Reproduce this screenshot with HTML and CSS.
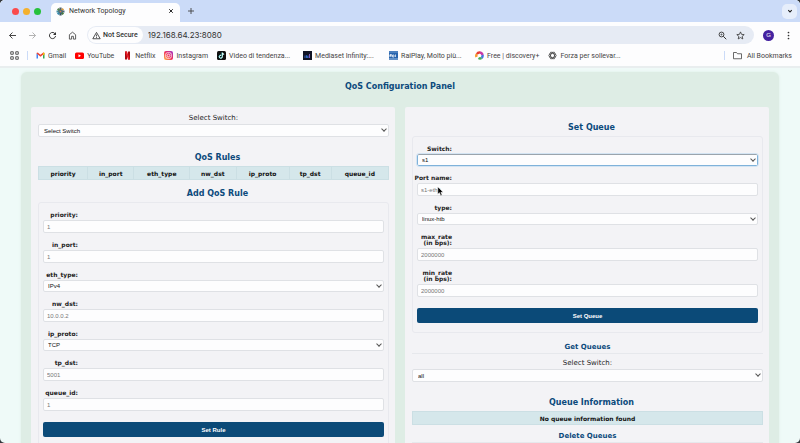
FILE: index.html
```html
<!DOCTYPE html>
<html lang="en">
<head>
<meta charset="utf-8">
<title>Network Topology</title>
<link rel="stylesheet" href="styles.css">
</head>
<body>
<div class="window">
  <header class="chrome">
    <div class="tabstrip">
      <div class="lights"><i class="red"></i><i class="amber"></i><i class="green"></i></div>
      <div class="tab">
        <svg class="ico" viewBox="0 0 18 18"><g fill="none" stroke-width="4.4"><path d="M9 1v5" stroke="#51616b"/><path d="M14.6 3.4L11 7" stroke="#d59a43"/><path d="M17 9h-5" stroke="#4a6478"/><path d="M14.6 14.6L11 11" stroke="#467b3f"/><path d="M9 17v-5" stroke="#33505f"/><path d="M3.4 14.6L7 11" stroke="#3988ad"/><path d="M1 9h5" stroke="#468fa4"/><path d="M3.4 3.4L7 7" stroke="#56834f"/></g><circle cx="9" cy="9" r="4" fill="#4e6f7c"/><circle cx="9" cy="9" r="1.6" fill="#e07944"/></svg>
        <span class="tab-title">Network Topology</span>
        <button class="icon-btn" aria-label="Close tab"><svg class="mini" viewBox="0 0 10 10"><path d="M2 2l6 6M8 2L2 8" stroke="#222" stroke-width="1.6"/></svg></button>
      </div>
      <button class="icon-btn new-tab" aria-label="New tab"><svg class="mini" viewBox="0 0 10 10"><path d="M5 0v10M0 5h10" stroke="#444" stroke-width="1.5"/></svg></button>
      <button class="icon-btn tab-search" aria-label="Search tabs"><svg class="mini" viewBox="0 0 10 10"><path d="M2 3.5l3 3 3-3" fill="none" stroke="#222" stroke-width="1.8"/></svg></button>
    </div>
    <div class="toolbar">
      <nav class="nav">
        <button class="icon-btn" aria-label="Back"><svg class="ico" viewBox="0 0 18 18"><path d="M16 9H3M9 3L3 9l6 6" fill="none" stroke="#333" stroke-width="1.8"/></svg></button>
        <button class="icon-btn" aria-label="Forward"><svg class="ico" viewBox="0 0 18 18"><path d="M2 9h13M9 3l6 6-6 6" fill="none" stroke="#aaa" stroke-width="1.8"/></svg></button>
        <button class="icon-btn" aria-label="Reload"><svg class="ico" viewBox="0 0 18 18"><path d="M14.6 6.2A6.2 6.2 0 1 0 15.2 10" fill="none" stroke="#333" stroke-width="1.9"/><path d="M16 1.8v6h-6z" fill="#333"/></svg></button>
        <button class="icon-btn" aria-label="Home"><svg class="ico" viewBox="0 0 18 18"><path d="M2.8 7.4L9 2.4l6.2 5v8.8h-4.4v-5.6H7.2v5.6H2.8z" fill="none" stroke="#444" stroke-width="1.7"/></svg></button>
      </nav>
      <div class="omnibox">
        <span class="secure"><svg class="ico" viewBox="0 0 18 18"><path d="M9 2.8L16.4 15.5H1.6z" fill="none" stroke="#333" stroke-width="1.7"/><path d="M9 7v4M9 12.2v1.8" stroke="#333" stroke-width="1.6"/></svg>Not Secure</span>
        <input class="url" type="text" aria-label="Address" value="192.168.64.23:8080">
        <button class="icon-btn" aria-label="Zoom"><svg class="ico" viewBox="0 0 18 18"><circle cx="7" cy="7" r="4.8" fill="none" stroke="#333" stroke-width="1.8"/><path d="M10.6 10.6L16.5 16.5" stroke="#333" stroke-width="2"/><path d="M4.8 7h4.4M7 4.8v4.4" stroke="#333" stroke-width="1"/></svg></button>
        <button class="icon-btn" aria-label="Bookmark"><svg class="ico" viewBox="0 0 18 18"><path d="M9 1.8l2.1 4.9 5.3.5-4 3.5 1.2 5.2L9 13.1l-4.6 2.8 1.2-5.2-4-3.5 5.3-.5z" fill="none" stroke="#333" stroke-width="1.6"/></svg></button>
      </div>
      <button class="avatar" aria-label="Profile">G</button>
      <button class="icon-btn" aria-label="Menu"><svg class="ico" viewBox="0 0 18 18"><g fill="#333"><circle cx="9" cy="3" r="1.7"/><circle cx="9" cy="9" r="1.7"/><circle cx="9" cy="15" r="1.7"/></g></svg></button>
    </div>
    <nav class="bookmarks">
      <button class="icon-btn apps" aria-label="Apps"><svg class="ico" viewBox="0 0 18 18"><path d="M1.5 1.5h5v5h-5zM11.5 1.5h5v5h-5zM1.5 11.5h5v5h-5zM11.5 11.5h5v5h-5z" fill="none" stroke="#444" stroke-width="1.8"/></svg></button>
      <div class="links">
      <a href="#"><svg class="ico" viewBox="0 0 18 18"><path d="M1 15V5l3 2v8z" fill="#4285f4"/><path d="M17 15V5l-3 2v8z" fill="#34a853"/><path d="M1 5l1-2 2 .5 5 4 5-4 2-.5 1 2-8 6.5z" fill="#ea4335"/><path d="M14 3.5L16 3l1 2v2l-3 2z" fill="#fbbc04"/></svg>Gmail</a>
      <a href="#"><svg class="ico" viewBox="0 0 18 18"><rect x="0" y="3" width="18" height="13" rx="3" fill="#f00"/><path d="M7 6.5l5 3-5 3z" fill="#fff"/></svg>YouTube</a>
      <a href="#"><svg class="ico" viewBox="0 0 18 18"><path d="M4 1h4v16H4zM10 1h4v16h-4z" fill="#a80b12"/><path d="M4 1h4l6 16h-4z" fill="#ec1c27"/></svg>Netflix</a>
      <a href="#"><svg class="ico" viewBox="0 0 18 18"><defs><linearGradient id="insta" x1="0" y1="1" x2="1" y2="0"><stop offset="0" stop-color="#ffc14a"/><stop offset=".5" stop-color="#f02c5c"/><stop offset="1" stop-color="#9a35ca"/></linearGradient></defs><rect width="18" height="18" rx="4" fill="url(#insta)"/><rect x="3.5" y="3.5" width="11" height="11" rx="3" fill="none" stroke="#fff" stroke-width="1.5"/><circle cx="9" cy="9" r="2.6" fill="none" stroke="#fff" stroke-width="1.5"/></svg>Instagram</a>
      <a class="long" href="#"><svg class="ico" viewBox="0 0 18 18"><rect width="18" height="18" rx="3" fill="#111"/><path d="M8 8.5a3 3 0 1 0 2.3 3V3.5c.5 2 1.5 3 3.5 3.2" fill="none" stroke="#25f4ee" stroke-width="2"/><path d="M8.5 8.5a3 3 0 1 0 2.3 3V3.5c.5 2 1.5 3 3.5 3.2" fill="none" stroke="#fff" stroke-width="1.7"/></svg>Video di tendenza...</a>
      <a class="long" href="#"><svg class="ico" viewBox="0 0 18 18"><rect width="18" height="18" fill="#101425"/><path d="M4 14V9M7 14V9l3 5V9" fill="none" stroke="#3974e0" stroke-width="1.6"/><path d="M13 14V6" stroke="#9463cf" stroke-width="1.8"/></svg>Mediaset Infinity:...</a>
      <a class="long" href="#"><svg class="ico" viewBox="0 0 18 18"><rect width="18" height="18" fill="#2864ad"/><path d="M0 1h18v2H0z" fill="#6c9bce"/><path d="M2 12V7h3v2H2l3 3M7 12V8h3v4H7M13 7v5" fill="none" stroke="#fff" stroke-width="1.4"/><path d="M0 16h18" stroke="#9fc0e3" stroke-width="2"/></svg>RaiPlay, Molto più...</a>
      <a href="#"><svg class="ico" viewBox="0 0 18 18"><g fill="none" stroke-width="5"><path d="M3 12a6 6 0 0 1 1-6" stroke="#f69b2d"/><path d="M4 6a6 6 0 0 1 6-3" stroke="#e83c35"/><path d="M10 3a6 6 0 0 1 5 5" stroke="#c73ba9"/><path d="M15 8a6 6 0 0 1-2 6" stroke="#4775df"/><path d="M13 14a6 6 0 0 1-6 0" stroke="#43ad5a"/></g><circle cx="9" cy="9" r="2.5" fill="#fff"/></svg>Free | discovery+</a>
      <a href="#"><svg class="ico" viewBox="0 0 18 18"><g fill="none" stroke="#444" stroke-width="1.5"><ellipse cx="9" cy="9" rx="7.5" ry="4"/><ellipse cx="9" cy="9" rx="7.5" ry="4" transform="rotate(60 9 9)"/><ellipse cx="9" cy="9" rx="7.5" ry="4" transform="rotate(120 9 9)"/></g></svg>Forza per sollevar...</a>
      </div>
      <a class="all" href="#"><svg class="ico" viewBox="0 0 18 18"><path d="M1 3h6l2 2.5h8V15.5H1z" fill="none" stroke="#444" stroke-width="1.6"/></svg>All Bookmarks</a>
    </nav>
  </header>
  <main class="page">
    <section class="panel">
      <h1>QoS Configuration Panel</h1>
      <div class="columns">
        <section class="card">
          <label class="pick" for="rule-switch">Select Switch:</label>
          <div class="select wide"><select id="rule-switch"><option>Select Switch</option></select></div>
          <h2 class="spaced">QoS Rules</h2>
          <table>
            <tr><th>priority</th><th>in_port</th><th>eth_type</th><th>nw_dst</th><th>ip_proto</th><th>tp_dst</th><th>queue_id</th></tr>
          </table>
          <h2>Add QoS Rule</h2>
          <form class="box">
            <div class="field"><label for="priority">priority:</label><input id="priority" type="text" placeholder="1"></div>
            <div class="field"><label for="in-port">in_port:</label><input id="in-port" type="text" placeholder="1"></div>
            <div class="field"><label for="eth">eth_type:</label><div class="select"><select id="eth"><option>IPv4</option></select></div></div>
            <div class="field"><label for="dst">nw_dst:</label><input id="dst" type="text" placeholder="10.0.0.2"></div>
            <div class="field"><label for="proto">ip_proto:</label><div class="select"><select id="proto"><option>TCP</option></select></div></div>
            <div class="field"><label for="tp">tp_dst:</label><input id="tp" type="text" placeholder="5001"></div>
            <div class="field"><label for="queue">queue_id:</label><input id="queue" type="text" placeholder="1"></div>
            <button class="submit" type="button">Set Rule</button>
          </form>
        </section>
        <section class="card">
          <h2 class="first">Set Queue</h2>
          <form class="box">
            <div class="field"><label for="q-switch">Switch:</label><div class="select active"><select id="q-switch"><option>s1</option></select></div></div>
            <div class="field"><label for="port">Port name:</label><div class="pointed"><input id="port" type="text" placeholder="s1-eth1"><svg class="pointer" viewBox="0 0 10 16"><path d="M1 1v11l2.5-2.3L5.3 14l2-.9-1.8-4H9z" fill="#000" stroke="#fff" stroke-width=".8"/></svg></div></div>
            <div class="field"><label for="type">type:</label><div class="select"><select id="type"><option>linux-htb</option></select></div></div>
            <div class="field"><label for="max">max_rate (in bps):</label><input id="max" type="text" placeholder="2000000"></div>
            <div class="field"><label for="min">min_rate (in bps):</label><input id="min" type="text" placeholder="2000000"></div>
            <button class="submit" type="button">Set Queue</button>
          </form>
          <h3>Get Queues</h3>
          <label class="pick" for="get-switch">Select Switch:</label>
          <div class="select wide"><select id="get-switch"><option>all</option></select></div>
          <h2 class="spaced">Queue Information</h2>
          <table><tr><th>No queue information found</th></tr></table>
          <h3 class="near">Delete Queues</h3>
        </section>
      </div>
    </section>
  </main>
</div>
</body>
</html>
```
FILE: styles.css
```css
* { box-sizing: border-box; }
body { margin: 0; background: #33383d; font-family: "DejaVu Sans", Verdana, sans-serif; color: #222; }
h1, h2, h3 { margin: 0; color: #0c4a7c; text-align: center; font-weight: bold; }
button, input, select { font-family: "Liberation Sans", Arial, sans-serif; margin: 0; }
svg { display: block; }

.window { height: 100vh; display: flex; flex-direction: column; overflow: hidden; border-radius: 5px; background: #effaf8; }

/* Browser chrome */
.chrome { flex: none; background: #fdfdfe; border-bottom: 2px solid #e9eeef; font-family: Roboto, Inter, sans-serif; font-size: 7px; color: #333; }
.icon-btn { border: 0; padding: 0; background: none; flex: none; }
.ico { width: 9px; height: 9px; flex: none; }
.mini { width: 6px; height: 6px; }
.tabstrip { height: 22px; display: flex; align-items: center; background: #cbdbf8; padding: 0 3px 0 12px; }
.lights { display: flex; gap: 4px; width: 39px; }
.lights i { width: 7px; height: 7px; border-radius: 50%; }
.red { background: #fb4b4c; }
.amber { background: #f4b02d; }
.green { background: #27c13b; }
.tab { align-self: flex-end; width: 129px; height: 19px; display: flex; align-items: center; gap: 4px; padding: 0 6px 3px 5px; background: #fdfdfe; border-radius: 5px 5px 0 0; }
.tab-title { flex: 1; }
.new-tab { margin-left: 8px; }
.tab-search { margin-left: auto; width: 15px; height: 15px; border-radius: 5px; background: #e6eefb; display: grid; place-items: center; }
.toolbar { height: 24px; display: flex; align-items: center; padding: 2px 7px 0 8px; }
.nav { display: flex; gap: 11px; margin-right: 10px; }
.omnibox { flex: 1; height: 18px; display: flex; align-items: center; gap: 9px; background: #e6ebf4; border-radius: 9px; padding: 0 9px 0 1px; }
.secure { height: 16px; display: flex; align-items: center; gap: 2px; padding: 0 5px 0 4px; border-radius: 8px; background: #fdfdfe; font-weight: 500; margin-right: -4px; }
.url { flex: 1; min-width: 0; border: 0; padding: 0; background: none; color: #333; font-family: Inter, Roboto, sans-serif; font-size: 8px; }
.avatar { width: 11px; height: 11px; margin: 0 10px 0 9px; padding: 0; border: 0; border-radius: 50%; background: #4522a0; color: #fff; font-size: 6px; line-height: 11px; }
.bookmarks { height: 20px; display: flex; align-items: center; padding: 0 8px 1px 10px; }
.bookmarks a { display: flex; align-items: center; gap: 3px; color: #444; text-decoration: none; white-space: nowrap; }
.bookmarks .long { width: 77px; }
.apps { margin-right: 8px; }
.links { display: flex; gap: 9px; border-left: 1px solid #cbdbf8; padding-left: 8px; }
.bookmarks .all { margin-left: auto; gap: 5px; border-left: 1px solid #cbdbf8; padding-left: 8px; }

/* Page */
.page { flex: 1; min-height: 0; overflow: hidden; padding: 4px 21px 0; }
.panel { background: #deede5; border-radius: 6px; padding: 9px 10px 20px; box-shadow: 0 0 3px #deede5; }
h1 { font-size: 8px; line-height: 12px; margin-bottom: 14px; }
.columns { display: grid; grid-template-columns: 1fr 1fr; gap: 10px; }
.card { background: #f3f3f6; border-radius: 2px; padding: 6px 6px 10px 7px; }
h2 { font-size: 8px; line-height: 12px; margin: 8px 0 2px; padding-left: 8px; }
h2.spaced { margin-top: 15px; }
h2.first { margin-top: 9px; }
h3 { font-size: 7px; line-height: 11px; margin: 9px 0 4px; border-bottom: 1px solid #e6e8ec; }
h3.near { margin-top: 6px; }
.pick { display: block; text-align: center; font-size: 7px; line-height: 10px; margin-bottom: 1px; }
table { width: 100%; border-collapse: collapse; background: #d5e7eb; }
th { border: 1px solid #cbdfe4; padding: 1px 2px; height: 13px; font-size: 6px; line-height: 9px; color: #111; text-align: center; }
.box { border: 1px solid #e8e9ee; border-radius: 3px; padding: 8px 4px 9px; }
.field { margin-bottom: 8px; }
.field label { display: block; width: 38px; margin: 0 0 2px -3px; text-align: right; font-size: 6px; line-height: 6px; font-weight: bold; padding-top: 1px; }
.field input, select { display: block; width: 100%; border: 1px solid #dfe1e5; border-radius: 2px; background: #fdfdfe; font-size: 6px; }
.field input { height: 13px; padding: 0 3px; }
.field input::placeholder { color: #777; }
.select { position: relative; }
select { height: 12px; padding: 0 4px; appearance: none; color: #111; }
.wide select { height: 13px; padding: 0 5px; }
.select::after { content: ""; position: absolute; right: 3px; top: 3px; width: 3px; height: 3px; border: solid #555; border-width: 0 1px 1px 0; transform: rotate(45deg); pointer-events: none; }
.active select { border-color: #7fb2da; border-top-color: #9aa4ad; outline: 1px solid #d3e4f3; }
.pointed { position: relative; }
.pointer { position: absolute; left: 20px; top: 3px; width: 7px; height: 11px; }
.submit { display: block; width: 100%; height: 15px; margin-top: 11px; padding: 0; border: 0; border-radius: 2px; background: #0b4a78; color: #fff; font-size: 6px; font-weight: bold; }
```
